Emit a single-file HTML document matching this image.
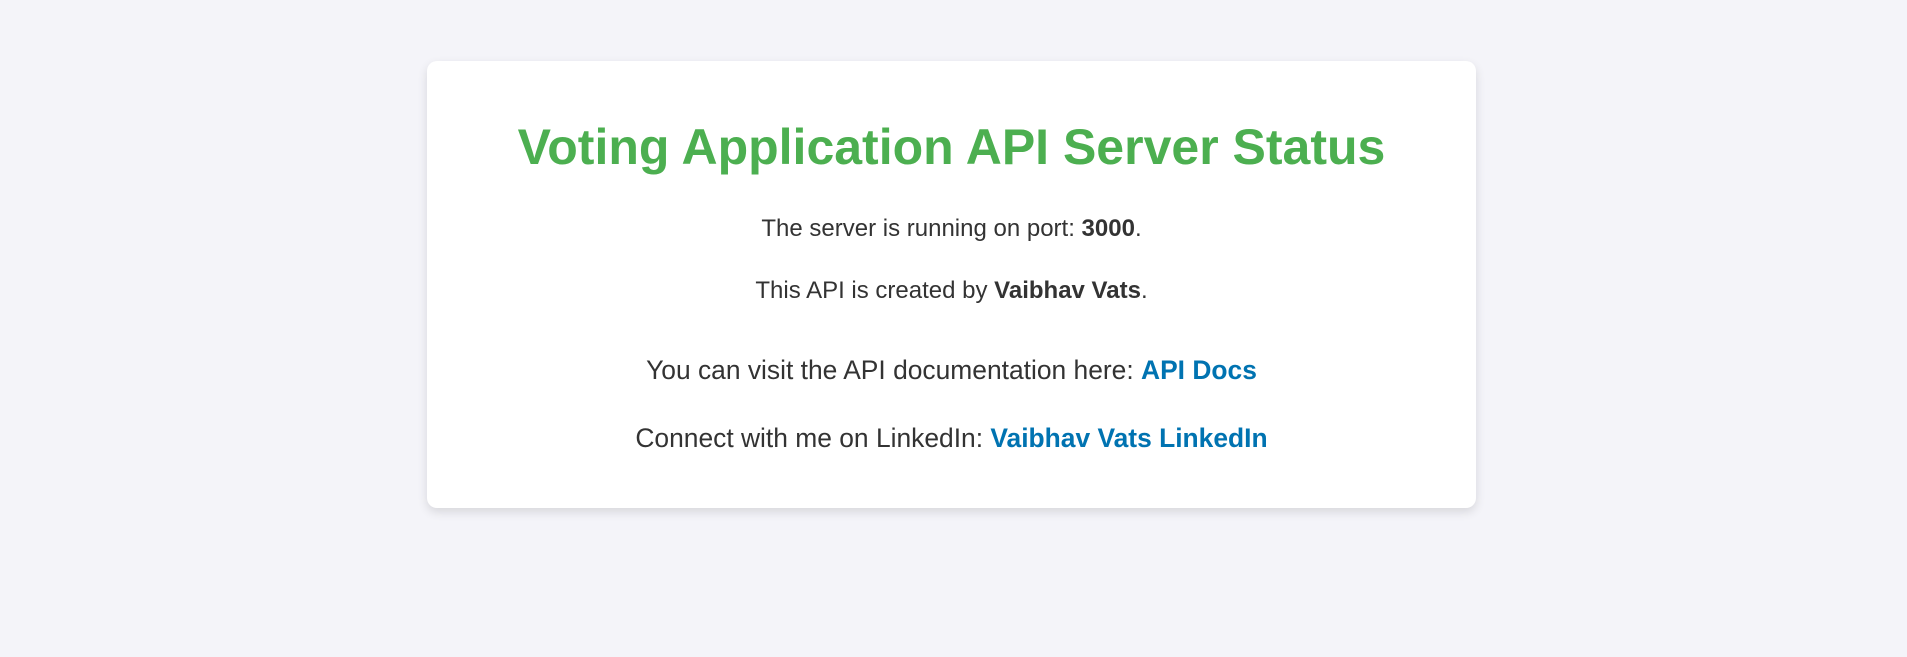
<!DOCTYPE html>
<html><head><meta charset="utf-8"><style>
html,body{margin:0;padding:0;}
body{width:1907px;height:657px;background:#f4f4f9;font-family:"Liberation Sans",Arial,sans-serif;color:#333;position:relative;overflow:hidden;}
.card{position:absolute;left:427px;top:61px;width:1049px;height:447px;background:#fff;border-radius:10px;box-shadow:0 4px 10px rgba(0,0,0,0.12);}
.l{position:absolute;left:0;right:0;text-align:center;white-space:nowrap;}
h1{margin:0;font-size:50px;font-weight:bold;color:#4caf50;line-height:1;}
.s{font-size:24px;line-height:1;}
.m{font-size:26.4px;line-height:1;}
a{color:#0073b1;font-weight:bold;text-decoration:none;}
</style></head><body>
<div class="card">
<h1 class="l" style="top:61px">Voting Application API Server Status</h1>
<div class="l s" style="top:156px">The server is running on port: <b>3000</b>.</div>
<div class="l s" style="top:218px">This API is created by <b>Vaibhav Vats</b>.</div>
<div class="l m" style="top:296px">You can visit the API documentation here: <a>API Docs</a></div>
<div class="l m" style="top:364px">Connect with me on LinkedIn: <a>Vaibhav Vats LinkedIn</a></div>
</div>
</body></html>
